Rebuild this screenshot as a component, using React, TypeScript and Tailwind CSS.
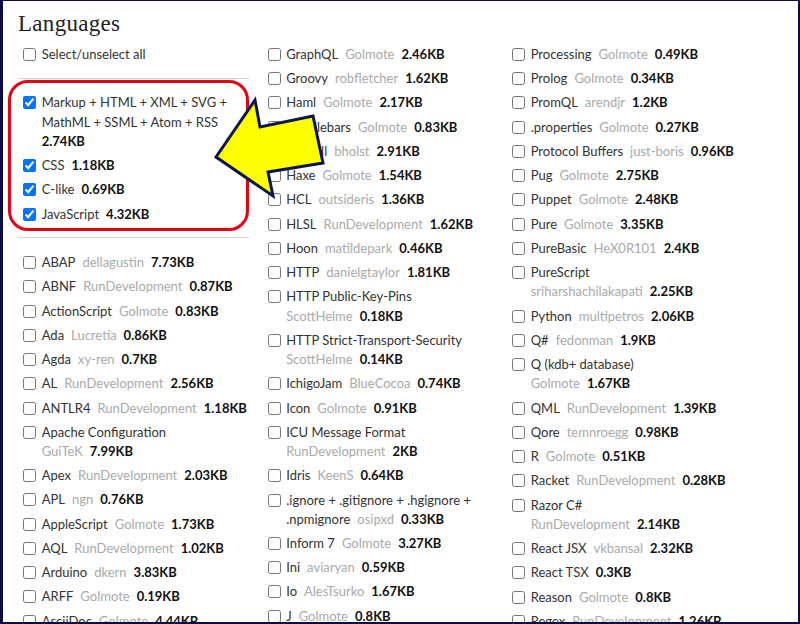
import React from "react";

type Part = ["l" | "a" | "s", string];
type Item = { rows: Part[][]; checked?: boolean };

const P = (l: string, a: string | null, s: string, checked = false): Item => ({
  rows: [[["l", l], ...(a ? ([["a", a]] as Part[]) : []), ["s", s]]],
  checked,
});
const W = (l: string, a: string | null, s: string): Item => ({
  rows: [[["l", l]], [...(a ? ([["a", a]] as Part[]) : []), ["s", s]]],
});

const col1Top: Item[] = [
  {
    rows: [
      [["l", "Markup + HTML + XML + SVG +"]],
      [["l", "MathML + SSML + Atom + RSS"]],
      [["s", "2.74KB"]],
    ],
    checked: true,
  },
  P("CSS", null, "1.18KB", true),
  P("C-like", null, "0.69KB", true),
  P("JavaScript", null, "4.32KB", true),
];

const col1Rest: Item[] = [
  P("ABAP", "dellagustin", "7.73KB"),
  P("ABNF", "RunDevelopment", "0.87KB"),
  P("ActionScript", "Golmote", "0.83KB"),
  P("Ada", "Lucretia", "0.86KB"),
  P("Agda", "xy-ren", "0.7KB"),
  P("AL", "RunDevelopment", "2.56KB"),
  P("ANTLR4", "RunDevelopment", "1.18KB"),
  W("Apache Configuration", "GuiTeK", "7.99KB"),
  P("Apex", "RunDevelopment", "2.03KB"),
  P("APL", "ngn", "0.76KB"),
  P("AppleScript", "Golmote", "1.73KB"),
  P("AQL", "RunDevelopment", "1.02KB"),
  P("Arduino", "dkern", "3.83KB"),
  P("ARFF", "Golmote", "0.19KB"),
  P("AsciiDoc", "Golmote", "4.44KB"),
  P("ASP.NET (C#)", "nauzilus", "0.91KB"),
];

const col2: Item[] = [
  P("GraphQL", "Golmote", "2.46KB"),
  P("Groovy", "robfletcher", "1.62KB"),
  P("Haml", "Golmote", "2.17KB"),
  P("Handlebars", "Golmote", "0.83KB"),
  P("Haskell", "bholst", "2.91KB"),
  P("Haxe", "Golmote", "1.54KB"),
  P("HCL", "outsideris", "1.36KB"),
  P("HLSL", "RunDevelopment", "1.62KB"),
  P("Hoon", "matildepark", "0.46KB"),
  P("HTTP", "danielgtaylor", "1.81KB"),
  W("HTTP Public-Key-Pins", "ScottHelme", "0.18KB"),
  W("HTTP Strict-Transport-Security", "ScottHelme", "0.14KB"),
  P("IchigoJam", "BlueCocoa", "0.74KB"),
  P("Icon", "Golmote", "0.91KB"),
  W("ICU Message Format", "RunDevelopment", "2KB"),
  P("Idris", "KeenS", "0.64KB"),
  {
    rows: [
      [["l", ".ignore + .gitignore + .hgignore +"]],
      [
        ["l", ".npmignore"],
        ["a", "osipxd"],
        ["s", "0.33KB"],
      ],
    ],
  },
  P("Inform 7", "Golmote", "3.27KB"),
  P("Ini", "aviaryan", "0.59KB"),
  P("Io", "AlesTsurko", "1.67KB"),
  P("J", "Golmote", "0.8KB"),
  P("Java", "sherblot", "1.21KB"),
];

const col3: Item[] = [
  P("Processing", "Golmote", "0.49KB"),
  P("Prolog", "Golmote", "0.34KB"),
  P("PromQL", "arendjr", "1.2KB"),
  P(".properties", "Golmote", "0.27KB"),
  P("Protocol Buffers", "just-boris", "0.96KB"),
  P("Pug", "Golmote", "2.75KB"),
  P("Puppet", "Golmote", "2.48KB"),
  P("Pure", "Golmote", "3.35KB"),
  P("PureBasic", "HeX0R101", "2.4KB"),
  W("PureScript", "sriharshachilakapati", "2.25KB"),
  P("Python", "multipetros", "2.06KB"),
  P("Q#", "fedonman", "1.9KB"),
  W("Q (kdb+ database)", "Golmote", "1.67KB"),
  P("QML", "RunDevelopment", "1.39KB"),
  P("Qore", "temnroegg", "0.98KB"),
  P("R", "Golmote", "0.51KB"),
  P("Racket", "RunDevelopment", "0.28KB"),
  W("Razor C#", "RunDevelopment", "2.14KB"),
  P("React JSX", "vkbansal", "2.32KB"),
  P("React TSX", null, "0.3KB"),
  P("Reason", "Golmote", "0.8KB"),
  P("Regex", "RunDevelopment", "1.26KB"),
];

function PartSpan({ part, first }: { part: Part; first: boolean }) {
  const [k, t] = part;
  const ml = first ? "" : "ml-[7px]";
  if (k === "l") return <span className={`text-[#333] ${ml}`}>{t}</span>;
  if (k === "a") return <span className={`text-[#aaa] ${ml}`}>{t}</span>;
  return <span className={`font-bold text-[#111] ${ml}`}>{t}</span>;
}

function Row({ item }: { item: Item }) {
  return (
    <label className="flex items-start pl-[5.3px]">
      <input
        type="checkbox"
        defaultChecked={item.checked}
        className="m-0 mt-[3px] mr-[5.4px] w-[13px] h-[13px] shrink-0"
      />
      <div className="leading-[19.2px] text-[13px]">
        {item.rows.map((r, i) => (
          <div key={i} className="whitespace-nowrap">
            {r.map((p, j) => (
              <PartSpan key={j} part={p} first={j === 0} />
            ))}
          </div>
        ))}
      </div>
    </label>
  );
}

function Sep() {
  return <div className="h-px bg-[#d4d4d4] mt-[8.6px] mb-[9.6px] w-[231px]" />;
}

export default function App() {
  return (
    <div className="relative w-[800px] h-[624px] overflow-hidden bg-white border-solid border-[#0b0b45] border-l-[3px] border-t border-r-2 border-b-2 pl-[15px] pt-[9px] font-['Lato',sans-serif]">
      <h1 className="font-['Liberation_Serif',serif] text-[23px] leading-[28px] text-[#222] mb-[6.9px] tracking-[0.3px]">
        Languages
      </h1>
      <div className="grid grid-cols-[244.5px_244.5px_244.5px] items-start">
        <div className="flex flex-col gap-[5.05px]">
          <Row item={{ rows: [[["l", "Select/unselect all"]]] }} />
          <Sep />
          {col1Top.map((it, i) => (
            <Row key={i} item={it} />
          ))}
          <Sep />
          {col1Rest.map((it, i) => (
            <Row key={i} item={it} />
          ))}
        </div>
        <div className="flex flex-col gap-[5.05px]">
          {col2.map((it, i) => (
            <Row key={i} item={it} />
          ))}
        </div>
        <div className="flex flex-col gap-[5.05px]">
          {col3.map((it, i) => (
            <Row key={i} item={it} />
          ))}
        </div>
      </div>

      {/* annotation: red rounded box */}
      <div className="absolute left-[5px] top-[79px] w-[241px] h-[151px] border-[3px] border-[#e60012] rounded-[20px] pointer-events-none" />

      {/* annotation: yellow arrow */}
      <svg
        className="absolute left-[-3px] top-[-1px] pointer-events-none"
        width="800"
        height="624"
        viewBox="0 0 800 624"
      >
        <polygon
          points="216,157 255,100 260,127 313,116 323,163 268,172 273,196"
          fill="#ffff00"
          stroke="#0b1650"
          strokeWidth="3"
          strokeLinejoin="miter"
        />
      </svg>
    </div>
  );
}
